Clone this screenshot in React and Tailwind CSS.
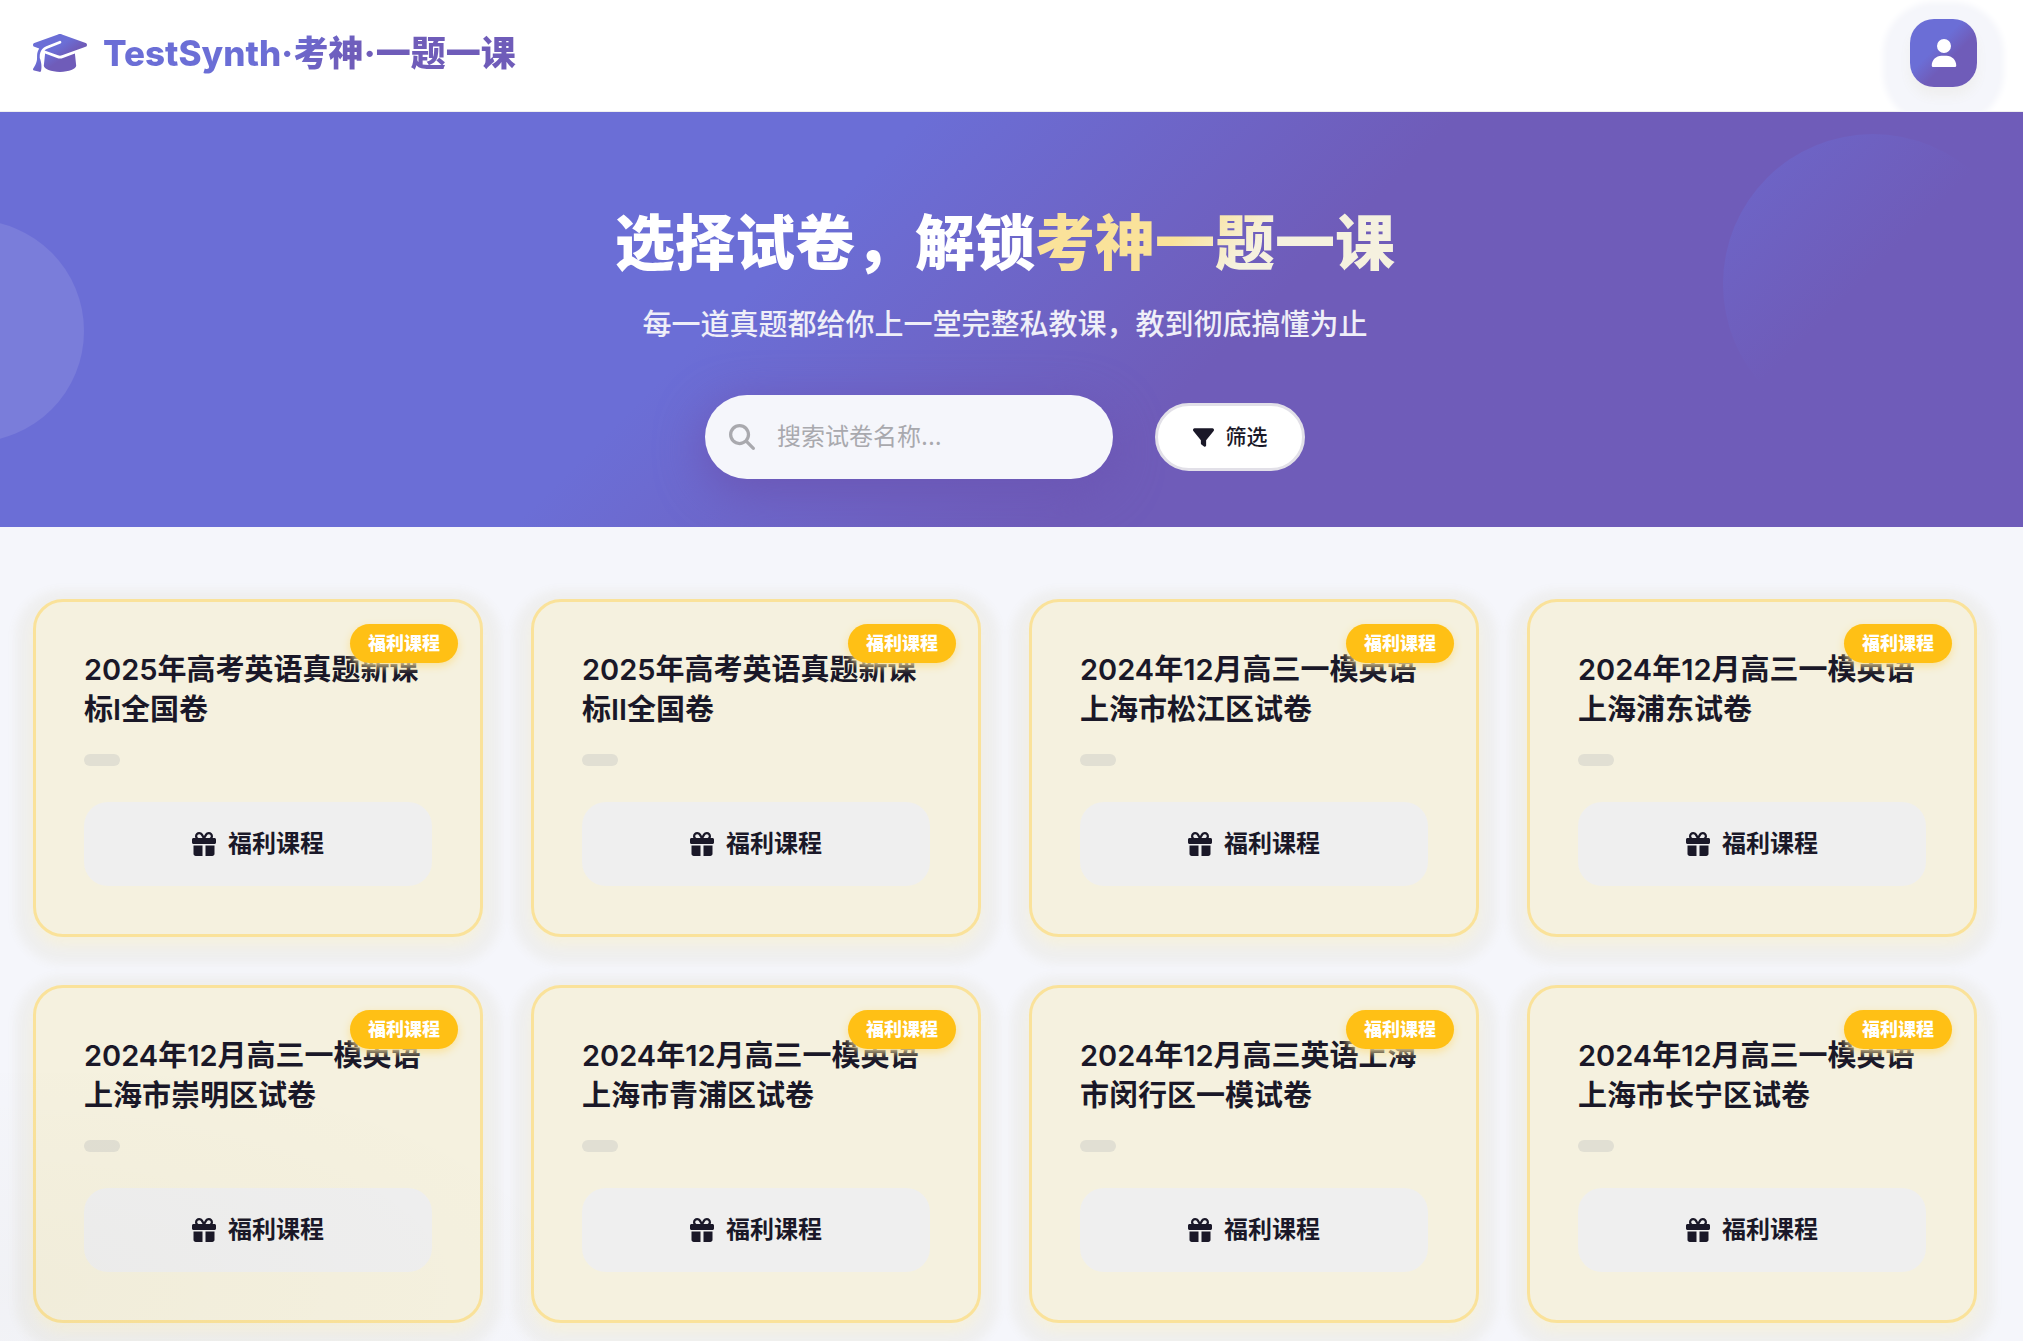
import { FaGift, FaFilter, FaGraduationCap, FaMagnifyingGlass, FaUser } from "react-icons/fa6";

const papers = [
  "2025年高考英语真题新课标I全国卷",
  "2025年高考英语真题新课标II全国卷",
  "2024年12月高三一模英语上海市松江区试卷",
  "2024年12月高三一模英语上海浦东试卷",
  "2024年12月高三一模英语上海市崇明区试卷",
  "2024年12月高三一模英语上海市青浦区试卷",
  "2024年12月高三英语上海市闵行区一模试卷",
  "2024年12月高三一模英语上海市长宁区试卷",
];

const Header = () => (
  <header className="flex h-28 items-start justify-between border-b border-[#efefef] bg-white pt-[19px] pr-[46px] pl-[33px]">
    <a href="#" className="flex h-[68px] items-center gap-4">
      <svg className="absolute size-0" aria-hidden="true">
        <defs>
          <linearGradient id="cap" x1="0" y1="0" x2="1" y2="1">
            <stop offset="40%" stopColor="#6b6ed6" />
            <stop offset="60%" stopColor="#6f5cb9" />
          </linearGradient>
        </defs>
      </svg>
      <FaGraduationCap size={54} className="fill-[url(#cap)]" />
      <span className="bg-linear-135 from-[#6b6ed6] from-40% to-[#6f5cb9] to-60% bg-clip-text text-[35px] leading-[52px] font-extrabold text-transparent">
        TestSynth·考神·一题一课
      </span>
    </a>
    <button
      type="button"
      aria-label="个人中心"
      className="flex h-[68px] w-[67px] items-center justify-center rounded-[24px] bg-linear-135 from-[#6b6ed6] from-40% to-[#6f5cb9] to-60% text-white shadow-[0_9px_12px_#efefef,0_10px_6px_27px_#f5f6fb]"
    >
      <FaUser size={28} />
    </button>
  </header>
);

const Hero = () => (
  <section className="relative overflow-hidden bg-linear-135 from-[#6b6ed6] from-38% to-[#6f5cb9] to-60% pt-[95px] pr-[13px] pb-12 text-center">
    <div className="absolute top-[108px] -left-[138px] size-[222px] rounded-full bg-white/10" />
    <div className="absolute top-[22px] right-0 size-[300px] rounded-full bg-linear-135 from-[#6b6ed6]/60 to-transparent to-48%" />
    <div className="relative">
      <h1 className="text-[60px] leading-[72px] font-extrabold text-white">
        选择试卷，解锁
        <span className="bg-linear-135 from-[#fae29a] from-40% to-[#f5f1df] to-60% bg-clip-text text-transparent">
          考神一题一课
        </span>
      </h1>
      <p className="mt-6 text-[29px] leading-[43px] font-medium text-[#efeff8]">
        每一道真题都给你上一堂完整私教课，教到彻底搞懂为止
      </p>
      <div className="mt-[49px] flex items-center justify-center gap-[42px]">
        <div className="flex h-[84px] w-[408px] items-center gap-[22px] rounded-full bg-[#f5f6fb] px-6 shadow-[0_12px_48px_#6b56b4]">
          <FaMagnifyingGlass size={26} className="shrink-0 text-[#a9a9ae]" />
          <input
            type="text"
            aria-label="搜索试卷"
            placeholder="搜索试卷名称..."
            className="w-full bg-transparent text-[24px] text-[#1a1828] outline-none placeholder:text-[#a9a9ae]"
          />
        </div>
        <button
          type="button"
          className="flex h-[68px] w-[150px] items-center justify-center gap-3 rounded-full border-3 border-[#e2e0e8] bg-white text-[21px] font-medium text-[#1a1828]"
        >
          <FaFilter size={21} />
          筛选
        </button>
      </div>
    </div>
  </section>
);

const PaperCard = ({ title }) => (
  <article className="relative rounded-[30px] border-3 border-[#fae29a] bg-[#f5f1df] p-12 shadow-[0_9px_12px_#f5f1df,0_9px_10px_18px_#efefef]">
    <h3 className="text-[29px] leading-10 font-semibold text-[#1a1828]">{title}</h3>
    <div className="mt-6 h-3 w-9 rounded-full bg-[#e1dfd3]" />
    <button
      type="button"
      className="mt-9 flex h-[84px] w-full items-center justify-center gap-3 rounded-[24px] bg-[#efefef] text-[24px] font-semibold text-[#1a1828]"
    >
      <FaGift size={24} />
      福利课程
    </button>
    <span className="absolute top-[22px] right-[22px] rounded-[20px] bg-[#ffc015] px-[18px] text-[18px] leading-[39px] font-extrabold text-white shadow-[0_3px_8px_#fae29a]">
      福利课程
    </span>
  </article>
);

const App = () => {
  return (
    <div className="relative min-h-screen overflow-hidden bg-[#f5f6fb] font-['Inter','Noto_Sans_CJK_SC',sans-serif]">
      <Header />
      <Hero />
      <main className="grid grid-cols-4 gap-12 pt-[72px] pr-[46px] pb-[17px] pl-[33px]">
        {papers.map((title) => (
          <PaperCard key={title} title={title} />
        ))}
      </main>
      {/* soft glow in the page corner */}
      <div className="pointer-events-none absolute bottom-0 left-0 h-[268px] w-[540px] bg-[radial-gradient(ellipse_at_0%_80%,rgba(60,50,0,0.025),transparent_80%)]" />
    </div>
  );
};

export default App;
